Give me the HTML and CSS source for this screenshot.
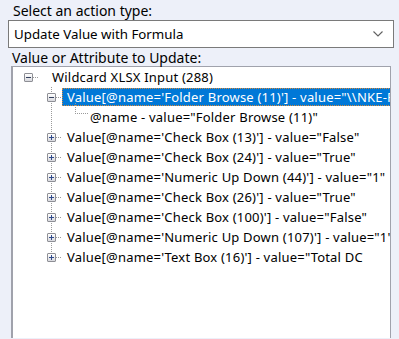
FILE: index.html
```html
<!DOCTYPE html>
<html>
<head>
<meta charset="utf-8">
<title>Update action</title>
<link rel="stylesheet" href="styles.css">
</head>
<body>
<div class="panel">
    <div class="field-label first">Select an action type:</div>
    <div class="combo">
        <span class="combo-text">Update Value with Formula</span>
        <svg class="chevron" width="10" height="6" viewBox="0 0 10 6">
            <polyline points="0.5,0.5 5,5 9.5,0.5" fill="none" stroke="#606060" stroke-width="1.1"/>
        </svg>
    </div>

    <div class="field-label">Value or Attribute to Update:</div>
    <div class="tree">
        <div class="row root">
            <span class="exp minus"></span>
            <span class="conn"></span>
            <span class="label root-label">Wildcard XLSX Input (288)</span>
        </div>
        <div class="children">
            <div class="row">
                <span class="exp minus"></span>
                <span class="conn"></span>
                <span class="label selected">Value[@name='Folder Browse (11)'] - value="\\NKE-FS01\Shared\Reports\Weekly"</span>
            </div>
            <div class="row leaf">
                <span class="elbow"></span>
                <span class="label">@name - value="Folder Browse (11)"</span>
            </div>
            <div class="row">
                <span class="exp plus"></span>
                <span class="conn"></span>
                <span class="label">Value[@name='Check Box (13)'] - value="False"</span>
            </div>
            <div class="row">
                <span class="exp plus"></span>
                <span class="conn"></span>
                <span class="label">Value[@name='Check Box (24)'] - value="True"</span>
            </div>
            <div class="row">
                <span class="exp plus"></span>
                <span class="conn"></span>
                <span class="label">Value[@name='Numeric Up Down (44)'] - value="1"</span>
            </div>
            <div class="row">
                <span class="exp plus"></span>
                <span class="conn"></span>
                <span class="label">Value[@name='Check Box (26)'] - value="True"</span>
            </div>
            <div class="row">
                <span class="exp plus"></span>
                <span class="conn"></span>
                <span class="label">Value[@name='Check Box (100)'] - value="False"</span>
            </div>
            <div class="row">
                <span class="exp plus"></span>
                <span class="conn"></span>
                <span class="label">Value[@name='Numeric Up Down (107)'] - value="1"</span>
            </div>
            <div class="row">
                <span class="exp plus"></span>
                <span class="conn"></span>
                <span class="label">Value[@name='Text Box (16)'] - value="Total DC</span>
            </div>
        </div>
    </div>
</div>
</body>
</html>
```

FILE: styles.css
```css
html, body {
    margin: 0;
    height: 100%;
    overflow: hidden;
}

body {
    background: #edf0f9;
    font-family: "Noto Sans", "Open Sans", sans-serif;
    font-size: 14px;
    color: #000;
}

.panel {
    padding: 2px 5px 0 8px;
}

.field-label {
    height: 17px;
    line-height: 17px;
    padding-left: 4px;
}

.field-label.first {
    height: 18px;
    padding-left: 5px;
}

.combo {
    display: flex;
    align-items: center;
    justify-content: space-between;
    box-sizing: border-box;
    height: 28px;
    width: 386px;
    border: 1px solid #7a7a7a;
    background: #fff;
    padding: 0 10px 0 5px;
    margin-bottom: 1px;
    font-size: 13.3px;
}

.tree {
    box-sizing: border-box;
    margin-left: 3px;
    width: 380px;
    height: 272px;
    border: 1px solid #a0a2ac;
    border-left-width: 2px;
    border-bottom: none;
    background: #fff;
    overflow: hidden;
    font-size: 13px;
}

.row {
    display: flex;
    align-items: center;
    height: 20px;
    white-space: nowrap;
}

.root {
    padding-left: 11px;
}

.exp {
    flex: none;
    width: 7px;
    height: 7px;
    border: 1px solid #8e8f95;
    border-radius: 1px;
}

.exp.minus {
    background:
        linear-gradient(#33405e, #33405e) center / 5px 1px no-repeat,
        linear-gradient(#ffffff, #d8d9de);
}

.exp.plus {
    background:
        linear-gradient(#2f4a8a, #2f4a8a) center / 5px 1px no-repeat,
        linear-gradient(#2f4a8a, #2f4a8a) center / 1px 5px no-repeat,
        linear-gradient(#ffffff, #d8d9de);
}

.conn {
    flex: none;
    width: 5px;
    height: 0;
    border-top: 1px dotted #9a9a9a;
    margin-right: 1px;
}

.label {
    display: inline-block;
    line-height: 18px;
    padding: 0 4px 0 5px;
    letter-spacing: 0.2px;
}

.root-label {
    margin-left: 8px;
}

.children {
    margin-left: 34px;
    background: repeating-linear-gradient(to bottom, #9a9a9a 0 1px, transparent 1px 2px) no-repeat 4px 0 / 1px calc(100% - 10px);
}

.leaf {
    align-items: flex-start;
    padding-left: 28px;
}

.elbow {
    flex: none;
    width: 12px;
    height: 10px;
    border-left: 1px dotted #9a9a9a;
    border-bottom: 1px dotted #9a9a9a;
    margin-top: -4px;
}

.leaf .label {
    margin-top: 1px;
    padding-left: 2px;
}

.selected {
    background: #0078d7;
    color: #fff;
    outline: 1px dotted #d98a3a;
    outline-offset: -1px;
}
```
